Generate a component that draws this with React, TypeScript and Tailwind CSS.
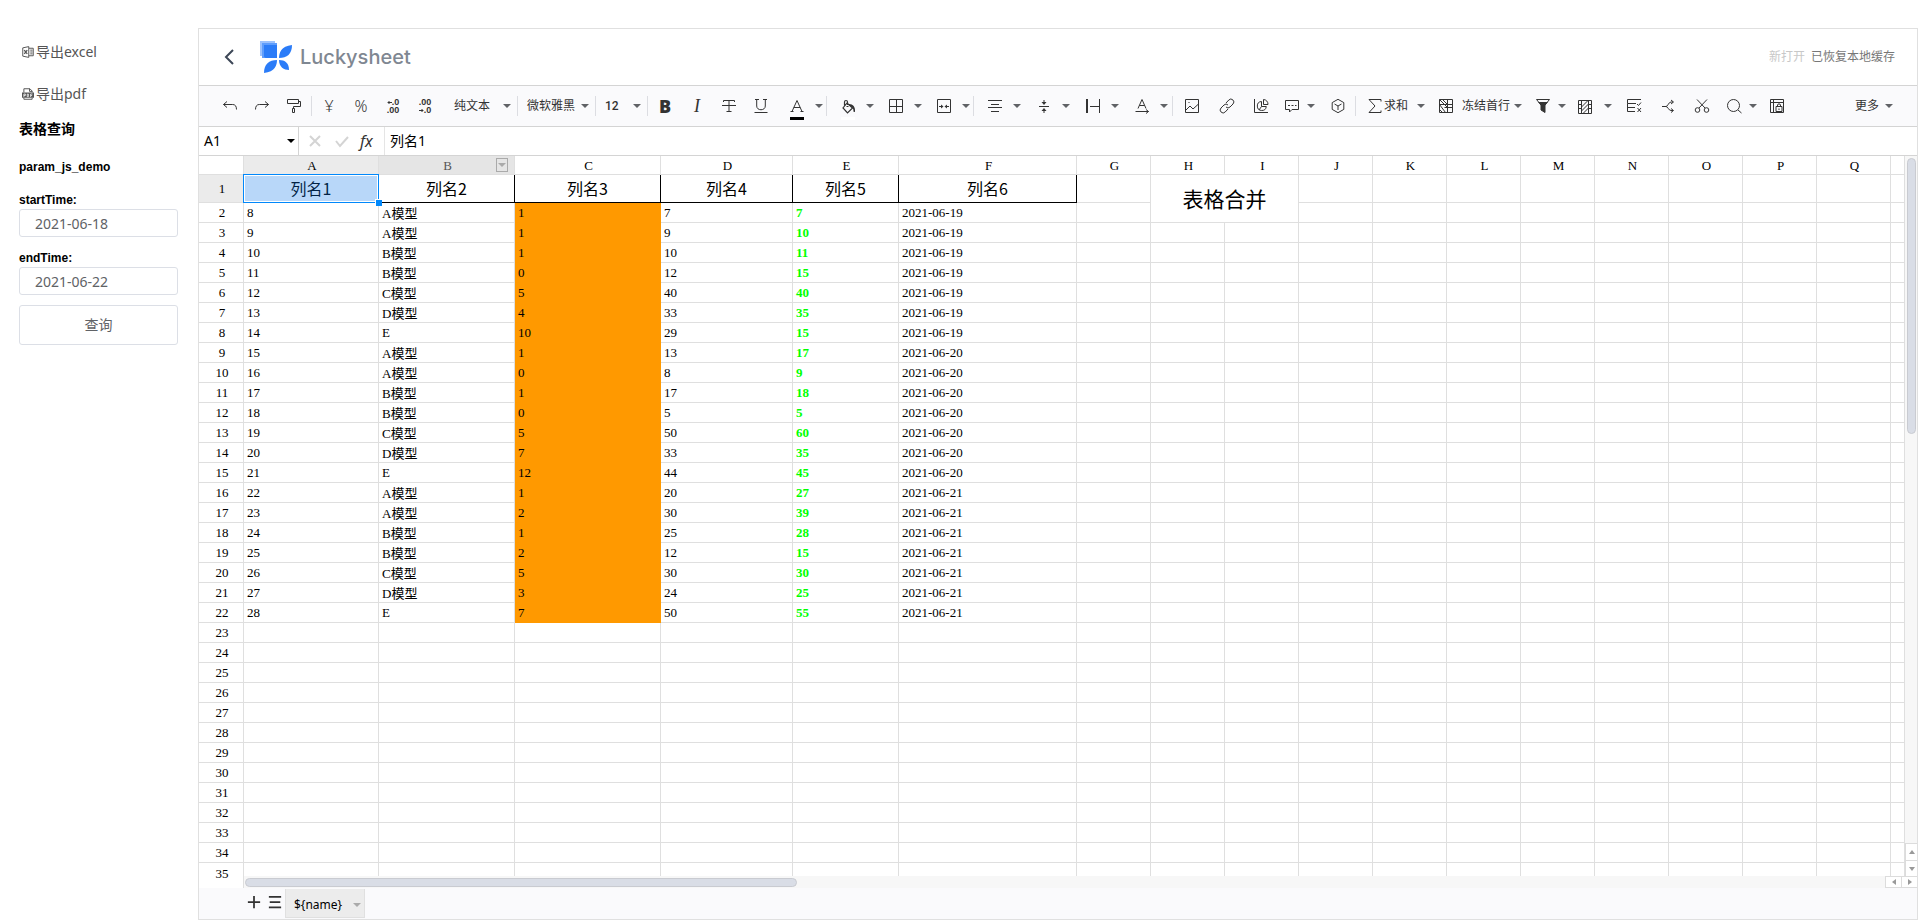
import type { ReactNode } from "react";
import clsx from "clsx";

const HEADERS = ["列名1", "列名2", "列名3", "列名4", "列名5", "列名6"];
const LETTERS = "ABCDEFGHIJKLMNOPQ".split("");
const COL_WIDTHS = [45, 135, 136, 146, 132, 106, 178, ...Array(11).fill(74)];

const ROWS = [
  ["8", "A模型", "1", "7", "7", "2021-06-19"],
  ["9", "A模型", "1", "9", "10", "2021-06-19"],
  ["10", "B模型", "1", "10", "11", "2021-06-19"],
  ["11", "B模型", "0", "12", "15", "2021-06-19"],
  ["12", "C模型", "5", "40", "40", "2021-06-19"],
  ["13", "D模型", "4", "33", "35", "2021-06-19"],
  ["14", "E", "10", "29", "15", "2021-06-19"],
  ["15", "A模型", "1", "13", "17", "2021-06-20"],
  ["16", "A模型", "0", "8", "9", "2021-06-20"],
  ["17", "B模型", "1", "17", "18", "2021-06-20"],
  ["18", "B模型", "0", "5", "5", "2021-06-20"],
  ["19", "C模型", "5", "50", "60", "2021-06-20"],
  ["20", "D模型", "7", "33", "35", "2021-06-20"],
  ["21", "E", "12", "44", "45", "2021-06-20"],
  ["22", "A模型", "1", "20", "27", "2021-06-21"],
  ["23", "A模型", "2", "30", "39", "2021-06-21"],
  ["24", "B模型", "1", "25", "28", "2021-06-21"],
  ["25", "B模型", "2", "12", "15", "2021-06-21"],
  ["26", "C模型", "5", "30", "30", "2021-06-21"],
  ["27", "D模型", "3", "24", "25", "2021-06-21"],
  ["28", "E", "7", "50", "55", "2021-06-21"],
];

const LAST_ROW = 35;

function Svg({ children, className = "size-4" }: { children: ReactNode; className?: string }) {
  return (
    <svg viewBox="0 0 16 16" className={clsx("shrink-0", className)} fill="none" stroke="currentColor" aria-hidden>
      {children}
    </svg>
  );
}

function Caret({ className = "text-[#606266]" }: { className?: string }) {
  return (
    <svg viewBox="0 0 10 6" className={clsx("h-1.5 w-2.5 shrink-0", className)} fill="currentColor" aria-hidden>
      <path d="M1 1h8L5 5z" />
    </svg>
  );
}

function SmallArrow({ d }: { d: string }) {
  return (
    <svg viewBox="0 0 5 5" className="size-[5px]" fill="none" stroke="currentColor" aria-hidden>
      <path d={d} />
    </svg>
  );
}

const icons = {
  undo: <Svg><path d="M5 3.5 1.5 6.5 5 9.5M1.5 6.5h9.2c2.4 0 3.8 1.6 3.8 5" /></Svg>,
  redo: <Svg><path d="m11 3.5 3.5 3-3.5 3M14.5 6.5H5.3C2.9 6.5 1.5 8.100 1.5 11.5" /></Svg>,
  paint: <Svg><path d="M1.500 1.500h11v4h-11zM12.500 3.500h2v5h-7v2M6.500 10.500h2v4h-2z" /></Svg>,
  strike: (
    <Svg>
      <path d="M2.500 4V2.500h11V4M8 2.500v11M5.500 13.500h5M1 7.500h14" />
    </Svg>
  ),
  underline: (
    <Svg>
      <path d="M2 1.500h4M10 1.500h4M3.700 1.500V8c0 5 8.600 5 8.600 0V1.500M1.500 14.500h13" />
    </Svg>
  ),
  fontColor: (
    <Svg>
      <path d="M3 12.500 8 1.500l5 11M4.800 8.500h6.400M1.500 12.500h3M11.500 12.500h3" />
    </Svg>
  ),
  fill: (
    <Svg>
      <path strokeWidth="1.200" d="M4.500 6.500V3c0-2 3-2 3 0v3M7 4l5.500 5-5 5L3 9zM6.500 7.500h2" />
      <path stroke="none" fill="currentColor" d="M9 5c4 0 6.500 3 6 7.500-.5 1-1.600.600-1.500-.5C13.500 9.500 12 7.500 9 6.500z" />
    </Svg>
  ),
  border: <Svg><path d="M1.500 1.500h13v13h-13zM8.500 1.500v13M1.500 8.500h13" /></Svg>,
  merge: (
    <Svg>
      <path d="M1.500 1.500h13v13h-13zM3 8.500h3M13 8.500h-3" />
      <path stroke="none" fill="currentColor" d="M5 6.500l2.500 2L5 10.500zM11 6.500l-2.500 2 2.500 2z" />
    </Svg>
  ),
  align: <Svg><path d="M1 2.500h14M4 6.500h8M1 9.500h14M4 13.500h8" /></Svg>,
  vertical: (
    <Svg>
      <path d="M3 8.500h10M8 2v3M8 15v-3" />
      <path stroke="none" fill="currentColor" d="M5.500 4h5L8 7zM5.500 13h5L8 10z" />
    </Svg>
  ),
  overflow: <Svg><path strokeWidth="2" d="M2 1v14" /><path d="M5 8.500h9M14.500 1v14" /></Svg>,
  rotate: <Svg><path d="M4 10.500 8 1.500l4 9M5.500 7.500h5M1.500 13.500h13M12 11.500l2.500 2-2.500 2" /></Svg>,
  image: <Svg><path d="M1.500 1.500h13v13h-13zM2 12l4-4 3 3 5.500-5M4.500 4.500h1" /></Svg>,
  link: (
    <Svg>
      <path d="m7 5 2.800-3a2.900 2.900 0 0 1 4.200 4l-3 3a2.800 2.800 0 0 1-4 0M9 11l-2.800 3A2.900 2.900 0 0 1 2 10l3-3a2.800 2.800 0 0 1 4 0" />
    </Svg>
  ),
  chart: (
    <Svg>
      <path d="M1.500 1v13.500H15M8.500 3.500a4.500 4.500 0 1 0 4.800 5H8.500zM10.500 1.500v5h4.500a4.700 4.700 0 0 0-4.500-5zM8.500 8.500 6 12" />
    </Svg>
  ),
  comment: (
    <Svg>
      <path d="M1.500 2.500h13v9H8L5.500 14v-2.500h-4z" />
      <path strokeDasharray="2 1.500" d="M4 7.500h8.500" />
    </Svg>
  ),
  cube: <Svg><path d="m8 1.300 5.800 3.300v6.800L8 14.700l-5.800-3.300V4.600zM4.500 6 8 8l3.500-2M8 8v4" /></Svg>,
  sum: <Svg><path d="M14 3.500v-2H2L8 8l-6 6.500h12v-2" /></Svg>,
  freeze: <Svg><path d="M1.500 1.500h13v13h-13zM9.500 1.500v13M1.500 6.500h13M6.500 9.500h8M1.500 1.500l8 8M1.500 6.500l6 8M4.500 1.500l5 5M1.500 11.500l3 3" /></Svg>,
  filter: (
    <Svg>
      <path d="M1.500 1.500h13L10 7v7.500L6 12V7z" />
      <path stroke="none" fill="currentColor" d="M3 4h10l-3 3.500v7L6 12V7.500z" />
    </Svg>
  ),
  cond: (
    <Svg>
      <path d="M1.500 2.500h13v13h-13zM1.500 6.500h3M1.500 10.500h3M4.500 2.500v13M11.500 2.500v13M11.500 6.500h3M11.500 10.500h3M4.500 9l6.500-6.500M4.500 13l7-7M6 15.500l5.500-5.500" />
    </Svg>
  ),
  clean: <Svg><path d="M15 1.500H1.500v4H10M1.500 9.500H9M1.500 5.500v8H9M11 6l1.500 1.500L15 4.500M11.500 10l3.500 4M15 10l-3.500 4" /></Svg>,
  split: <Svg><path d="M2 8.500h4c2 0 2.500-4.500 5-4.500h2M6 8.500c2 0 2.500 4 5 4h2M11 2l2.500 2L11 6M11 10.500l2.500 2-2.500 2" /></Svg>,
  cut: (
    <Svg>
      <circle cx="3.500" cy="12" r="2.300" />
      <circle cx="12.500" cy="12" r="2.300" />
      <path d="M3 1.500 11 10M13 1.500 5 10" />
    </Svg>
  ),
  search: <Svg><circle cx="7.500" cy="7.500" r="6" /><path d="m12 12 3.500 3" /></Svg>,
  lock: (
    <Svg>
      <path d="M1.500 1.500h13v13h-13zM1.500 4.500h13M4.500 1.500v13M7 8.500h6v5H7zM8.500 8.500V7c0-1.500 3-1.500 3 0v1.500M10 10.500v1.500" />
    </Svg>
  ),
};

function Decimals({ top, bottom }: { top: ReactNode; bottom: ReactNode }) {
  return (
    <span className="flex flex-col items-end font-['Liberation_Sans',sans-serif] text-[9px] leading-[8px] font-bold">
      <span className="flex items-center">{top}</span>
      <span className="flex items-center">{bottom}</span>
    </span>
  );
}

function Tool({ label, width = "w-8", children }: { label: string; width?: string; children: ReactNode }) {
  return (
    <button type="button" aria-label={label} className={clsx("flex h-8 shrink-0 items-center justify-center", width)}>
      {children}
    </button>
  );
}

function DropTool({ label, box, children }: { label: string; box: string; children: ReactNode }) {
  return (
    <button type="button" aria-label={label} className={clsx("flex h-8 shrink-0 items-center justify-between", box)}>
      <span className="flex w-7 flex-col items-center">{children}</span>
      <Caret />
    </button>
  );
}

function Divider() {
  return <span className="mx-px h-5 w-px shrink-0 bg-[#dcdde2]" />;
}

function Toolbar() {
  return (
    <div className="flex h-[41px] shrink-0 items-center overflow-hidden border-b border-[#d4d4d4] bg-[#fafafc] pl-[15px] text-xs whitespace-nowrap text-[#333]">
      <Tool label="撤销">{icons.undo}</Tool>
      <Tool label="重做">{icons.redo}</Tool>
      <Tool label="格式刷">{icons.paint}</Tool>
      <Divider />
      <Tool label="货币格式"><span className="text-base font-light">¥</span></Tool>
      <Tool label="百分比格式"><span className="text-base font-light">%</span></Tool>
      <Tool label="减少小数位数">
        <Decimals top={<><SmallArrow d="M5 2.500H1M2.500 1 1 2.500 2.500 4" />.0</>} bottom=".00" />
      </Tool>
      <Tool label="增加小数位数">
        <Decimals top=".00" bottom={<><SmallArrow d="M0 2.500h4M2.500 1 4 2.500 2.500 4" />.0</>} />
      </Tool>
      <button type="button" className="flex h-8 w-[75px] shrink-0 items-center justify-between pr-1 pl-[13px]">
        纯文本 <Caret />
      </button>
      <Divider />
      <button type="button" className="flex h-8 w-[75px] shrink-0 items-center justify-between pr-1 pl-2">
        微软雅黑 <Caret />
      </button>
      <Divider />
      <button type="button" className="flex h-8 w-[49px] shrink-0 items-center justify-between pr-1 pl-2">
        <span className="font-['Roboto',sans-serif] text-xs font-medium">12</span> <Caret />
      </button>
      <Divider />
      <Tool label="粗体"><span className="font-['Open_Sans',sans-serif] text-lg font-extrabold">B</span></Tool>
      <Tool label="斜体"><span className="font-['Liberation_Serif',serif] text-lg italic">I</span></Tool>
      <Tool label="删除线">{icons.strike}</Tool>
      <Tool label="下划线">{icons.underline}</Tool>
      <DropTool label="文本颜色" box="w-12 pl-1.5 pr-px">
        <span className="mt-[7px] flex flex-col items-center">
          {icons.fontColor}
          <span className="mt-0.5 h-[3px] w-3.5 bg-black" />
        </span>
      </DropTool>
      <Divider />
      <DropTool label="单元格颜色" box="w-12 pl-1.5 pr-px">
        <span className="mt-[7px] flex flex-col items-center">
          {icons.fill}
          <span className="mt-0.5 h-[3px] w-3.5 bg-white" />
        </span>
      </DropTool>
      <DropTool label="边框" box="w-12 pl-1.5 pr-px">{icons.border}</DropTool>
      <DropTool label="合并单元格" box="w-12 pl-1.5 pr-px">{icons.merge}</DropTool>
      <Divider />
      <DropTool label="水平对齐" box="w-[49px] pl-1.5 pr-0.5">{icons.align}</DropTool>
      <DropTool label="垂直对齐" box="w-[49px] pl-1.5 pr-0.5">{icons.vertical}</DropTool>
      <DropTool label="文本换行" box="w-[49px] pl-1.5 pr-0.5">{icons.overflow}</DropTool>
      <DropTool label="文本旋转" box="w-[49px] pl-1.5 pr-0.5">{icons.rotate}</DropTool>
      <Divider />
      <Tool label="插入图片" width="w-9">{icons.image}</Tool>
      <Tool label="插入链接" width="w-[34px]">{icons.link}</Tool>
      <Tool label="图表" width="w-[34px]">{icons.chart}</Tool>
      <DropTool label="批注" box="w-11 pr-1.5">{icons.comment}</DropTool>
      <Tool label="数据透视表">{icons.cube}</Tool>
      <Divider />
      <button type="button" className="flex h-8 w-[73px] shrink-0 items-center pr-1 pl-2.5">
        {icons.sum}
        <span className="ml-px grow text-left">求和</span>
        <Caret />
      </button>
      <button type="button" className="flex h-8 w-[97px] shrink-0 items-center pr-1 pl-2">
        {icons.freeze}
        <span className="ml-2 grow text-left">冻结首行</span>
        <Caret />
      </button>
      <DropTool label="筛选" box="w-11 pl-0.5 pr-1">{icons.filter}</DropTool>
      <DropTool label="条件格式" box="w-[46px] pr-1">{icons.cond}</DropTool>
      <Tool label="数据验证" width="w-[34px]">{icons.clean}</Tool>
      <Tool label="分列" width="w-[34px]">{icons.split}</Tool>
      <Tool label="截图" width="w-[34px]">{icons.cut}</Tool>
      <DropTool label="查找替换" box="w-[41px] pl-px pr-0.5">{icons.search}</DropTool>
      <Tool label="工作表保护" width="w-[34px]">{icons.lock}</Tool>
      <button type="button" className="mr-[23px] ml-auto flex h-8 shrink-0 items-center gap-[5px]">
        更多 <Caret />
      </button>
    </div>
  );
}

function Sidebar() {
  const box = "rounded-[3px] border border-[#dcdfe6] bg-white text-sm text-[#606266]";
  const label = "font-['Liberation_Sans',sans-serif] text-xs leading-[22px] font-bold text-black";
  return (
    <aside className="w-[198px] shrink-0 pt-[31px] pr-5 pl-[19px]">
      <a href="#excel" className="flex h-[42px] items-center gap-0.5 pl-[3px] text-sm text-[#555]">
        <Svg className="size-3">
          <path strokeWidth="1.300" d="M9 3V.8L1 2.500v11l8 1.700V3h6v10H9M11 5.500h3M11 8h3M11 10.500h3" />
          <path strokeWidth="1.800" d="m3 5.500 4 5M7 5.500l-4 5" />
        </Svg>
        导出excel
      </a>
      <a href="#pdf" className="flex h-[42px] items-center gap-0.5 pl-[3px] text-sm text-[#555]">
        <Svg className="size-3">
          <path strokeWidth="1.300" d="M2.500 6V1h8l3 3v2M10 1v3.500h3.500M2.500 13v2h11v-2" />
          <path stroke="none" fill="currentColor" d="M0 6h16v7H0z" />
          <path stroke="#fff" d="M2.500 12V8h2v2h-2M7 8v3.500h1.500V8zM11.500 12V8h2.500M11.500 10h2" />
        </Svg>
        导出pdf
      </a>
      <form onSubmit={(e) => e.preventDefault()} className="flex flex-col">
        <h1 className="h-7 text-sm leading-7 font-bold text-black">表格查询</h1>
        <h2 className="pt-0.5 font-['Liberation_Sans',sans-serif] text-xs leading-[44px] font-bold text-black">
          param_js_demo
        </h2>
        <label htmlFor="startTime" className={label}>
          startTime:
        </label>
        <input id="startTime" defaultValue="2021-06-18" className={clsx("-mt-0.5 h-7 w-full px-[15px]", box)} />
        <label htmlFor="endTime" className={clsx("mt-2.5", label)}>
          endTime:
        </label>
        <input id="endTime" defaultValue="2021-06-22" className={clsx("-mt-0.5 h-7 w-full px-[15px]", box)} />
        <button type="submit" className={clsx("mt-2.5 h-10 w-full", box)}>
          查询
        </button>
      </form>
    </aside>
  );
}

function TitleBar() {
  return (
    <header className="flex h-[57px] shrink-0 items-center border-b border-[#d4d4d4] bg-white pr-[22px] pl-[25px]">
      <button type="button" aria-label="返回" className="text-[#3d4757]">
        <svg viewBox="0 0 10 16" className="h-4 w-2.5" fill="none" stroke="currentColor" strokeWidth="2" aria-hidden>
          <path d="M9 1 2 8l7 7" />
        </svg>
      </button>
      <svg viewBox="0 0 32 32" className="ml-[26px] size-8" aria-hidden>
        <path fill="#9cc2fd" d="M0 0h15v15H0z" />
        <path fill="#5e9dfc" d="M2 2h15v15H2z" />
        <path fill="#2b7cf8" d="M4 4h13v13H6c-1 0-2-1-2-2z" />
        <path fill="#2b7cf8" d="M32 4c0 9-5 13-13 13 0-5 2-12 13-13z" />
        <path fill="#2b7cf8" d="M4 32c0-9 5-13 13-13 0 5-2 12-13 13z" />
        <path fill="#2b7cf8" d="M19 19c6 0 10 3 10 10-5 0-10-3-10-10z" />
      </svg>
      <span className="ml-2 font-['Inter',sans-serif] text-xl font-medium text-[#7f8792]">Luckysheet</span>
      <div className="ml-auto flex gap-1.5 text-xs">
        <span className="text-[#c8c8c8]">新打开</span>
        <span className="text-[#777]">已恢复本地缓存</span>
      </div>
    </header>
  );
}

function FormulaBar() {
  return (
    <div className="flex h-[29px] shrink-0 items-stretch border-b border-[#d4d4d4] bg-white text-sm text-black">
      <button type="button" className="flex w-[100px] shrink-0 items-center justify-between border-r border-[#d4d4d4] pr-0.5 pl-[5px]">
        A1 <Caret className="text-black" />
      </button>
      <div className="flex w-[86px] shrink-0 items-center border-r border-[#e5e5e5] pl-2">
        <button type="button" aria-label="取消" className="w-[27px] text-[#d4d4d4]">
          <Svg><path strokeWidth="2" d="m3 3 10 10M13 3 3 13" /></Svg>
        </button>
        <button type="button" aria-label="确认" className="w-[26px] text-[#d4d4d4]">
          <Svg><path strokeWidth="2" d="m2 8 4 5 8-9" /></Svg>
        </button>
        <button type="button" aria-label="函数" className="text-base text-[#333] italic">fx</button>
      </div>
      <input aria-label="编辑栏" defaultValue="列名1" className="min-w-0 grow px-[5px]" />
    </div>
  );
}

function Sheet() {
  const line = "border-r border-b border-[#dfdfdf] p-0 font-normal";
  const rowHead = "border-r border-b border-[#dfdfdf] p-0 pl-0.5 font-normal";
  const emptyTail = (from: number) =>
    Array.from({ length: 18 - from }, (_, i) => <td key={`e${from + i}`} className={line} />);

  return (
    <table className="w-full min-w-[1692px] table-fixed border-separate border-spacing-0 font-['Liberation_Serif','Noto_Sans_CJK_SC',serif] text-[13px] leading-[19px] text-black">
      <colgroup>
        {COL_WIDTHS.map((w, i) => (
          <col key={i} style={{ width: w }} />
        ))}
        <col />
      </colgroup>
      <thead>
        <tr className="h-[19px] leading-4">
          <th className={line} />
          {LETTERS.map((l) => (
            <th
              key={l}
              scope="col"
              className={clsx(
                "border-r border-b border-[#dfdfdf] p-0 pt-0.5 pl-0.5 font-normal",
                l === "A" && "bg-[#ebebeb]",
                l === "B" && "relative bg-[#e5e5e5] text-[#555]",
              )}
            >
              {l}
              {l === "B" && (
                <button
                  type="button"
                  aria-label="列菜单"
                  className="absolute top-0.5 right-1.5 flex h-3.5 w-3 items-center justify-center border border-[#aaa]"
                >
                  <Caret className="text-[#aaa]" />
                </button>
              )}
            </th>
          ))}
          <td className={line} />
        </tr>
      </thead>
      <tbody>
        <tr className="h-7">
          <th scope="row" className={clsx(rowHead, "bg-[#ebebeb]")}>1</th>
          {HEADERS.map((h, i) => (
            <td
              key={h}
              className="relative border-r border-b border-black p-0 text-center font-['Noto_Sans_CJK_SC',sans-serif] text-base leading-[27px]"
            >
              {h}
              {i === 0 && (
                <span className="absolute -inset-px z-10 border border-[#0188fb] p-px">
                  <span className="block h-full bg-[#0a74ea]/29" />
                  <span className="absolute -right-1 -bottom-1 size-[7px] border-t border-l border-white bg-[#0188fb]" />
                </span>
              )}
            </td>
          ))}
          <td className={line} />
          <td
            colSpan={2}
            rowSpan={2}
            className={clsx(line, "text-center font-['Noto_Sans_CJK_SC',sans-serif] text-[21px]")}
          >
            表格合并
          </td>
          {emptyTail(9)}
        </tr>
        {ROWS.map((row, r) => (
          <tr key={r} className="h-5">
            <th scope="row" className={rowHead}>{r + 2}</th>
            {row.map((v, c) => (
              <td
                key={c}
                className={clsx(
                  "border-r border-b pl-[3px]",
                  v.endsWith("模型") ? "pt-0.5 leading-[17px]" : "pt-0",
                  c === 2 ? "border-[#ff9900] bg-[#ff9900]" : "border-[#dfdfdf]",
                  c === 4 && "font-bold text-[#00ff00]",
                )}
              >
                {v}
              </td>
            ))}
            {r === 0 ? (
              <>
                <td className={line} />
                {emptyTail(9)}
              </>
            ) : (
              emptyTail(6)
            )}
          </tr>
        ))}
        {Array.from({ length: LAST_ROW - ROWS.length - 1 }, (_, i) => i + ROWS.length + 2).map((n) => (
          <tr key={n} className="h-5">
            <th scope="row" className={n === LAST_ROW ? "border-r border-[#dfdfdf] p-0 pl-0.5 font-normal" : rowHead}>
              {n}
            </th>
            {emptyTail(0)}
          </tr>
        ))}
      </tbody>
    </table>
  );
}

function ScrollButton({ label, d, box }: { label: string; d: string; box: string }) {
  return (
    <button type="button" aria-label={label} className={clsx("flex shrink-0 items-center justify-center border-[#dcdcdc] bg-white text-[#999]", box)}>
      <svg viewBox="0 0 6 6" className="size-1.5" fill="currentColor" aria-hidden>
        <path d={d} />
      </svg>
    </button>
  );
}

function SheetTabs() {
  return (
    <footer className="flex h-[31px] shrink-0 items-start bg-[#fafafc] pl-12 text-[#333]">
      <button type="button" aria-label="新增工作表" className="mt-[7px] w-[21px]">
        <Svg className="size-3.5"><path strokeWidth="2" d="M8 1v14M1 8h14" /></Svg>
      </button>
      <button type="button" aria-label="工作表列表" className="mt-[7px] w-[17px]">
        <Svg className="size-3.5"><path strokeWidth="2" d="M1 2h14M2 8h12M1 14h14" /></Svg>
      </button>
      <button
        type="button"
        className="mt-px flex h-[29px] w-20 items-center justify-between border-x border-b border-[#e0e0e0] bg-[#ececec] pt-1 pr-0.5 pl-2 text-xs text-black"
      >
        {"${name}"} <Caret className="text-[#aaa]" />
      </button>
    </footer>
  );
}

export default function App() {
  return (
    <div className="flex h-screen overflow-hidden bg-white font-['Noto_Sans','Noto_Sans_CJK_SC',sans-serif]">
      <Sidebar />
      <main className="mt-7 flex min-w-0 grow flex-col border border-[#e0e0e0]">
        <TitleBar />
        <Toolbar />
        <FormulaBar />
        <div className="relative flex min-h-0 grow">
          <div className="min-w-0 grow overflow-hidden">
            <Sheet />
          </div>
          <div className="mb-3 flex w-3 shrink-0 flex-col bg-[#f7f7f7]">
            <div className="grow pt-0.5 pl-0.5">
              <div className="h-[276px] w-[9px] rounded-full border border-[#c9cbd1] bg-[#d9dde6]" />
            </div>
            <ScrollButton label="向上滚动" d="M0 5h6L3 1z" box="h-[17px] border-t border-l" />
            <ScrollButton label="向下滚动" d="M0 1h6L3 5z" box="h-4 border-t border-l" />
          </div>
          {/* floats over the cells only, the row numbers stay visible */}
          <div className="absolute right-0 bottom-0 left-11 flex h-3 border-l border-[#dfdfdf]">
            <div className="flex grow items-center bg-[#f7f7f7] pl-px">
              <div className="h-[9px] w-[552px] rounded-full border border-[#c9cbd1] bg-[#d9dde6]" />
            </div>
            <ScrollButton label="向左滚动" d="M5 0v6L1 3z" box="w-4 border-y border-l" />
            <ScrollButton label="向右滚动" d="M1 0v6l4-3z" box="w-4 border-y border-l" />
          </div>
        </div>
        <SheetTabs />
      </main>
    </div>
  );
}
